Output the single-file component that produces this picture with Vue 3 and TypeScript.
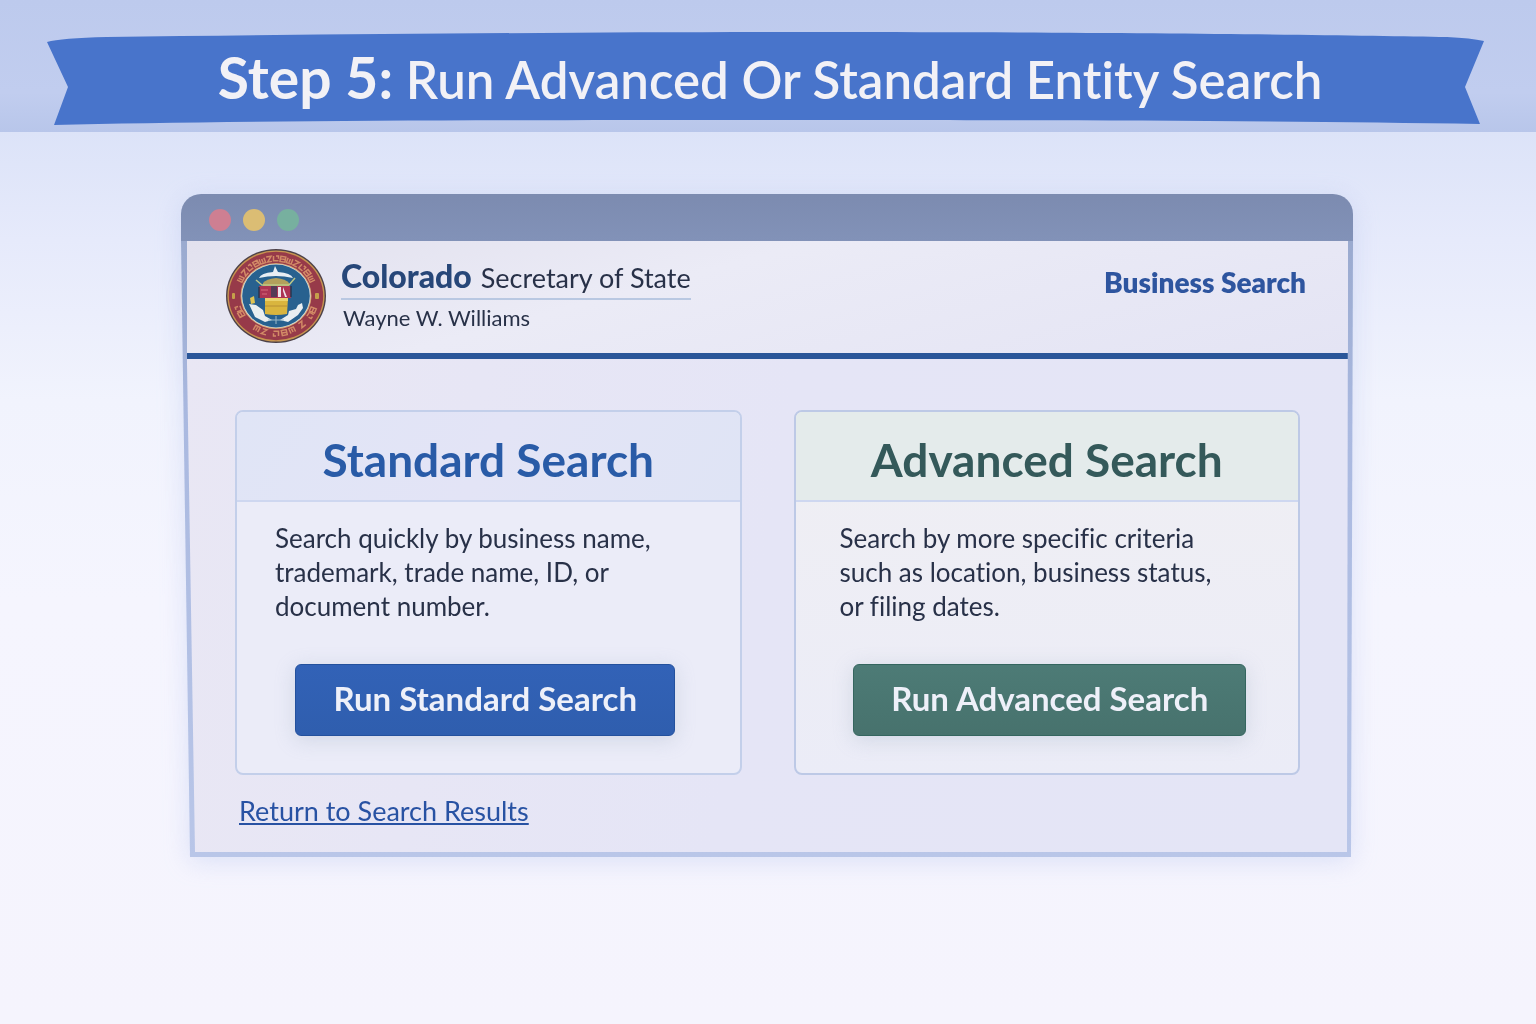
<script setup lang="ts">
interface SearchOption {
  kind: 'standard' | 'advanced'
  title: string
  lines: string[]
  action: string
}

const options: SearchOption[] = [
  {
    kind: 'standard',
    title: 'Standard Search',
    lines: ['Search quickly by business name,', 'trademark, trade name, ID, or', 'document number.'],
    action: 'Run Standard Search',
  },
  {
    kind: 'advanced',
    title: 'Advanced Search',
    lines: ['Search by more specific criteria', 'such as location, business status,', 'or filing dates.'],
    action: 'Run Advanced Search',
  },
]

// Ornaments on the ring of the seal: position in degrees and which shape to draw
const ornaments = [
  'M-2.5 -42.5V-37H2.5V-42.5M0 -42V-38',
  'M-2.5 -42.5H2.5L-2 -37H2.5',
  'M-2.5 -42.5V-37.5H2.5M0 -42.5H2.5V-39.5',
  'M-2.5 -42.5H2.5V-37H-2.5ZM-2 -39.8H2',
]
const upperMarks = [-63, -52, -41, -30, -20, -10, 0, 10, 20, 30, 41, 52, 63].map((angle, i) => ({
  angle,
  path: ornaments[i % ornaments.length],
}))
const lowerMarks = [112, 121, 139, 156, 168, 180, 197, 209, 241, 250].map((angle, i) => ({
  angle,
  path: ornaments[(i * 3 + 3) % ornaments.length],
}))
const marks = [...upperMarks, ...lowerMarks]
</script>

<template>
  <div class="page">
    <header class="masthead">
      <div class="banner">
        <svg class="ribbon" viewBox="0 0 1438 94" preserveAspectRatio="none" aria-hidden="true">
          <path d="M0 10 Q14 6 60 5 C300 2 560 0 770 0 C1060 0 1300 3 1400 5 Q1424 6 1437 9 L1418 55 L1433 92 C1200 88 900 88 700 88 C400 88 160 89 7 93 L21 55 Z" fill="#4874cb" />
        </svg>
        <h1 class="banner-title"><strong>Step 5:</strong> Run Advanced Or Standard Entity Search</h1>
      </div>
    </header>

    <main class="stage">
      <section class="window">
        <div class="titlebar">
          <span class="dot red"></span>
          <span class="dot yellow"></span>
          <span class="dot green"></span>
        </div>
        <div class="frame">
          <div class="content">
            <div class="site-header">
              <svg class="seal" viewBox="0 0 100 94" role="img" aria-label="State seal">
                <ellipse cx="50" cy="47" rx="50" ry="47" fill="#4d4148" />
                <ellipse cx="50" cy="47" rx="48.6" ry="45.6" fill="#c79450" />
                <ellipse cx="50" cy="47" rx="47.2" ry="44.2" fill="#973a49" />
                <g v-for="mark in marks" :key="mark.angle" :transform="`translate(50 47) scale(1 .94) rotate(${mark.angle})`" fill="none" stroke="#d28a66" stroke-width="1.5">
                  <path :d="mark.path" />
                </g>
                <rect x="6" y="44" width="3" height="6" rx="1" fill="#c5a04a" />
                <rect x="89" y="44" width="4" height="6" rx="1" fill="#c5a04a" />
                <ellipse cx="50" cy="47" rx="35.5" ry="33" fill="#d6a877" />
                <ellipse cx="50" cy="47" rx="34.5" ry="32" fill="#dfe3e4" />
                <ellipse cx="50" cy="47" rx="33.8" ry="31.4" fill="#28618f" />
                <path d="M33 29Q35 24 47 23L49 17L52 23Q65 24 67 29Q50 25 33 29Z" fill="#e9eef3" />
                <path d="M37 34Q40 30 50 29Q60 30 63 34V40H37Z" fill="#b3a05c" />
                <path d="M30 31L36 36H63L69 29" fill="none" stroke="#bdc787" stroke-width="1.5" />
                <path d="M33 37H65V49H33Z" fill="#ac3553" />
                <path d="M35 41H42M36 45H41" stroke="#d56d7d" stroke-width="1.2" />
                <path d="M45 37H51V48H45Z" fill="#563b56" />
                <path d="M52 38H55V48H52ZM57 38L61 48H59L57 42Z" fill="#efe6ed" />
                <path d="M33 38V49M65 37V48" stroke="#263850" stroke-width="1.5" />
                <path d="M39 49H62L61 65Q50 67 39 65Z" fill="#d9b53e" />
                <path d="M39 49H62V52H39Z" fill="#ead26c" />
                <path d="M39 57H61" stroke="#b68e34" stroke-width="1" />
                <path d="M23 55L30 56L37 61L39 67L46 71L39 73L29 68Z" fill="#e9eef1" />
                <path d="M24 49L28 47L29 54L25 55Z" fill="#dfc452" />
                <path d="M76 54L72 56L70 60L63 62L62 66L54 71L62 73L72 66L77 59Z" fill="#e9eef1" />
                <path d="M42 71H58M50 67V75" stroke="#9ab9c8" stroke-width="1" />
              </svg>
              <div class="identity">
                <p class="office"><strong>Colorado</strong> Secretary of State</p>
                <p class="officer">Wayne W. Williams</p>
              </div>
              <p class="section-name">Business Search</p>
            </div>

            <div class="cards">
              <article v-for="option in options" :key="option.kind" class="card" :class="option.kind">
                <h2 class="card-title">{{ option.title }}</h2>
                <div class="card-body">
                  <p class="card-text">
                    <template v-for="(line, i) in option.lines" :key="line"><br v-if="i > 0" />{{ line }}</template>
                  </p>
                  <button type="button" class="run">{{ option.action }}</button>
                </div>
              </article>
            </div>

            <a class="return" href="#">Return to Search Results</a>
          </div>
        </div>
      </section>
    </main>
  </div>
</template>

<style>
body {
  margin: 0;
  background: #f5f5fe;
}
</style>

<style scoped>
.page {
  min-height: 100vh;
  font-family: Lato, "Open Sans", sans-serif;
  font-variant-ligatures: no-common-ligatures;
  color: #283148;
  background: linear-gradient(180deg, #dce3f8 132px, #e6eafb 240px, #f1f3fd 400px, #f5f5fe 600px, #f5f4fd 100%);
}

h1,
h2,
p {
  margin: 0;
  font-weight: 400;
}

.masthead {
  box-sizing: border-box;
  height: 132px;
  padding: 32px 51px 0 47px;
  background: linear-gradient(180deg, #bdcaed, #c1cdef 70%, #b8c6ea);
}

.banner {
  position: relative;
  height: 94px;
}

.ribbon {
  position: absolute;
  inset: 0;
  width: 100%;
  height: 100%;
}

.banner-title {
  position: relative;
  padding-left: 8px;
  text-align: center;
  font-size: 51px;
  line-height: 90px;
  font-weight: 600;
  color: #f2f1f6;
  white-space: nowrap;
}

.banner-title strong {
  font-size: 57px;
  font-weight: 700;
}

.stage {
  padding: 62px 183px 0 181px;
}

.window {
  filter: drop-shadow(0 4px 12px rgba(170, 185, 235, 0.35));
}

.titlebar {
  display: flex;
  align-items: center;
  gap: 12px;
  height: 47px;
  padding: 4px 28px 0;
  box-sizing: border-box;
  border-radius: 20px 20px 0 0;
  background: linear-gradient(180deg, #7c8bb0, #8292b8);
}

.dot {
  width: 22px;
  height: 22px;
  border-radius: 50%;
}

.red {
  background: #ce7f92;
}

.yellow {
  background: #dbbd74;
}

.green {
  background: #77b09f;
}

.frame {
  padding: 0 5px 5px 6px;
  background: linear-gradient(180deg, #9aaacf, #aab9e0 30%, #b9c6e8);
  clip-path: polygon(0 0, 100% 0, calc(100% - 2px) 100%, 9px 100%);
}

.content {
  padding-bottom: 24px;
  background: linear-gradient(100deg, #e9e7f4, #e5e5f6 50%, #e4e5f6);
  clip-path: polygon(0 0, 100% 0, calc(100% - 1px) 100%, 8px 100%, 0 20%);
}

.site-header {
  display: flex;
  align-items: flex-start;
  height: 112px;
  padding: 0 42px 0 39px;
  border-bottom: 6px solid #2a5699;
  background: linear-gradient(165deg, #e2e1ee, #ebebf6 40%, #e4e4f4);
}

.seal {
  width: 100px;
  height: 94px;
  margin-top: 8px;
}

.identity {
  margin: 16px 0 0 15px;
}

.office {
  border-bottom: 2px solid #b9c8e2;
  font-size: 27px;
  line-height: 40px;
}

.office strong {
  margin-right: 2px;
  font-size: 32px;
  line-height: 38px;
  font-weight: 900;
  color: #274779;
}

.officer {
  padding: 4px 2px;
  font-size: 22px;
  line-height: 28px;
}

.section-name {
  margin: 23px 0 0 auto;
  font-size: 28px;
  line-height: 36px;
  font-weight: 800;
  color: #2e559f;
}

.cards {
  display: grid;
  grid-template-columns: 1fr 1fr;
  gap: 52px;
  padding: 51px 48px 0;
}

.card {
  border: 2px solid #c3cfea;
  border-radius: 8px;
  overflow: hidden;
  background: #ebecf8;
}

.card-title {
  height: 88px;
  border-bottom: 2px solid #ced7f0;
  text-align: center;
  font-size: 46px;
  line-height: 96px;
  font-weight: 700;
  color: #295ba7;
  background: linear-gradient(120deg, #e0e5f6, #e3e4f6 50%, #dfe4f5);
}

.card-body {
  display: flex;
  flex-direction: column;
  padding: 19px 44px 37px 38px;
}

.card-text {
  font-size: 26px;
  line-height: 34px;
  white-space: nowrap;
}

.run {
  align-self: center;
  height: 72px;
  margin-top: 41px;
  padding: 0 37px 4px;
  border: 1px solid #24519d;
  border-radius: 6px;
  font-family: inherit;
  font-size: 33px;
  font-weight: 700;
  color: #eef0f9;
  white-space: nowrap;
  background: linear-gradient(180deg, #3262b7, #2f5eae);
  box-shadow: 0 4px 20px rgba(150, 165, 190, 0.3);
}

.advanced {
  border-color: #bdc9e6;
  background: linear-gradient(180deg, #f0eff3, #ebecf7);
}

.advanced .card-title {
  color: #34595a;
  background: #e4ebeb;
}

.advanced .card-body {
  padding-right: 38px;
  padding-left: 44px;
}

.advanced .run {
  border-color: #35665f;
  background: linear-gradient(180deg, #4d7b76, #47726d);
}

.return {
  display: inline-block;
  margin: 19px 0 0 52px;
  font-size: 27px;
  line-height: 34px;
  color: #2852a3;
  text-decoration-thickness: 2px;
  text-decoration-skip-ink: none;
  text-underline-offset: 2px;
}
</style>
